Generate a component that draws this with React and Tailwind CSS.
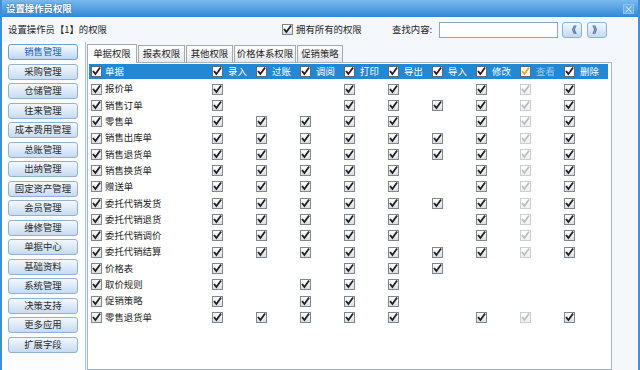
import React from 'react';

const FONT = { fontFamily: '"Noto Sans CJK SC", "Noto Sans", sans-serif' };

const MENU = [
  '销售管理', '采购管理', '仓储管理', '往来管理', '成本费用管理', '总账管理',
  '出纳管理', '固定资产管理', '会员管理', '维修管理', '单据中心', '基础资料',
  '系统管理', '决策支持', '更多应用', '扩展字段',
];

const TABS = [
  { label: '单据权限', w: 'w-[50px]', active: true },
  { label: '报表权限', w: 'w-[47px]' },
  { label: '其他权限', w: 'w-[47px]' },
  { label: '价格体系权限', w: 'w-[62px]' },
  { label: '促销策略', w: 'w-[46px]' },
];

const COLS = ['录入', '过账', '调阅', '打印', '导出', '导入', '修改', '查看', '删除'];

// 录入 过账 调阅 打印 导出 导入 修改 查看 删除
const ROWS = [
  ['报价单', [1, 0, 0, 1, 1, 0, 1, 1, 1]],
  ['销售订单', [1, 0, 0, 1, 1, 1, 1, 1, 1]],
  ['零售单', [1, 1, 1, 1, 1, 0, 1, 1, 1]],
  ['销售出库单', [1, 1, 1, 1, 1, 1, 1, 1, 1]],
  ['销售退货单', [1, 1, 1, 1, 1, 1, 1, 1, 1]],
  ['销售换货单', [1, 1, 1, 1, 1, 0, 1, 1, 1]],
  ['赠送单', [1, 1, 1, 1, 1, 0, 1, 1, 1]],
  ['委托代销发货', [1, 1, 1, 1, 1, 1, 1, 1, 1]],
  ['委托代销退货', [1, 1, 1, 1, 1, 0, 1, 1, 1]],
  ['委托代销调价', [1, 1, 1, 1, 1, 0, 1, 1, 1]],
  ['委托代销结算', [1, 1, 1, 1, 1, 1, 1, 1, 1]],
  ['价格表', [1, 0, 0, 1, 1, 1, 0, 0, 0]],
  ['取价规则', [1, 0, 1, 1, 1, 0, 0, 0, 0]],
  ['促销策略', [1, 0, 1, 1, 1, 0, 0, 0, 0]],
  ['零售退货单', [1, 1, 1, 1, 1, 0, 1, 1, 1]],
];

// Classic checked box
const Check = ({ disabled = false, header = false, mark }) => {
  const box = disabled
    ? 'border-[#c9ced3] bg-gradient-to-b from-white to-[#eef0f2]'
    : header
      ? 'border-[#5d6b78] bg-white'
      : 'border-[#7d8790] bg-gradient-to-b from-white to-[#dcdfe2]';
  const stroke = mark || (disabled ? '#b9bec3' : '#1e1e1e');
  return (
    <span className={`inline-flex w-[11px] h-[11px] shrink-0 border items-center justify-center ${box}`}>
      <svg width="9" height="9" viewBox="0 0 9 9">
        <path d="M1.5 4.6 L3.4 7 L7.6 1.2" fill="none" stroke={stroke} strokeWidth="1.7" strokeLinecap="square" />
      </svg>
    </span>
  );
};

const SideButton = ({ label, active }) => (
  <div
    className={`w-[70px] h-[16px] shrink-0 flex items-center justify-center rounded-[3px] border ${
      active
        ? 'border-[#6f9fd3] bg-gradient-to-b from-[#f8fbff] to-[#bcd6f2] text-[#1a5fc0]'
        : 'border-[#91b2d5] bg-gradient-to-b from-[#f4f8fd] to-[#c6dbf1] text-[#2a2a2a]'
    }`}
  >
    {label}
  </div>
);

const NavButton = ({ children }) => (
  <div className="w-[20px] h-[16px] flex items-center justify-center rounded-[3px] border border-[#8eb0d5] bg-gradient-to-b from-[#f3f8fe] to-[#c3d9f1] text-[#1f4f8a] font-bold leading-none">
    {children}
  </div>
);

export default function App() {
  return (
    <div
      className="w-[640px] h-[370px] overflow-hidden flex flex-col bg-[#f4f8fc] border-x-2 border-[#3c8fd8] text-[9.4px] text-[#1c1c1c] leading-none"
      style={FONT}
    >
      {/* Title bar */}
      <div className="h-[17px] shrink-0 flex items-center justify-between pl-[4px] pr-[4px] bg-gradient-to-b from-[#79b9ee] to-[#2f88d4]">
        <span className="text-white font-bold [text-shadow:0_0_2px_#1d5f9e]">设置操作员权限</span>
        <span className="w-[11px] h-[10px] flex items-center justify-center text-[10px] text-[#d6e9f9] bg-[#6aaee6] border border-[#8cc3ee]">×</span>
      </div>

      {/* Toolbar */}
      <div className="h-[25px] shrink-0 flex items-center pl-[6px]">
        <span className="w-[274px]">设置操作员【1】的权限</span>
        <div className="w-[110px] flex items-center gap-[3px]">
          <Check />
          <span>拥有所有的权限</span>
        </div>
        <span className="w-[47px]">查找内容:</span>
        <div className="w-[119px] h-[16px] border border-[#8ea7c0] bg-white"></div>
        <div className="ml-[4px]"><NavButton>《</NavButton></div>
        <div className="ml-[5px]"><NavButton>》</NavButton></div>
      </div>

      <div className="flex-1 flex min-h-0">
        {/* Module list */}
        <div className="w-[84px] shrink-0 border-r border-[#a8bccf] pl-[6px] pt-[2px] flex flex-col gap-[3.5px] bg-[#fbfdff]">
          {MENU.map((m, i) => (
            <SideButton key={m} label={m} active={i === 0} />
          ))}
        </div>

        {/* Tabs + grid */}
        <div className="flex-1 flex flex-col pl-[1px] min-w-0">
          <div className="h-[20px] shrink-0 flex items-end gap-[1px]">
            {TABS.map((t) => (
              <div
                key={t.label}
                className={`${t.w} flex items-center justify-center border border-[#a3a9b0] border-b-0 ${
                  t.active ? 'h-[19px] bg-white relative top-[1px]' : 'h-[17px] bg-gradient-to-b from-white to-[#e6e8eb]'
                }`}
              >
                {t.label}
              </div>
            ))}
          </div>

          <div className="w-[525px] flex-1 border border-[#a3b3c3] bg-white p-[1px]">
            {/* Header row */}
            <div className="h-[15px] flex items-center bg-[#2388d3] text-white mr-[2px]">
              <div className="w-[122px] flex items-center gap-[3px] pl-[2px]">
                <Check header mark="#3a1010" />
                <span>单据</span>
              </div>
              {COLS.map((c, i) => (
                <div key={c} className="w-[44px] flex items-center gap-[5px] pl-[1px]">
                  <Check header mark={i === 7 ? '#f0a030' : '#3a1010'} />
                  <span className={i === 7 ? 'text-[#9ccbee]' : ''}>{c}</span>
                </div>
              ))}
            </div>

            {/* Rows */}
            <div className="mt-[2px]">
              {ROWS.map(([name, vals]) => (
                <div key={name} className="h-[16.3px] flex items-center">
                  <div className="w-[122px] flex items-center gap-[3px] pl-[2px]">
                    <Check />
                    <span>{name}</span>
                  </div>
                  {vals.map((v, i) => (
                    <div key={i} className="w-[44px] flex items-center pl-[1px]">
                      {v ? <Check disabled={i === 7} /> : null}
                    </div>
                  ))}
                </div>
              ))}
            </div>
          </div>
        </div>
      </div>
    </div>
  );
}
